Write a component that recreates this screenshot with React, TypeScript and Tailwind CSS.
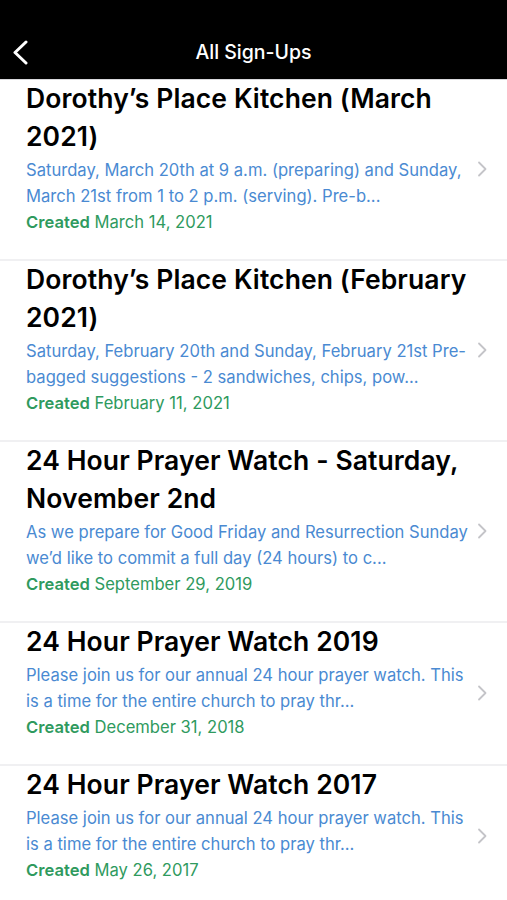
const items = [
  {
    title: 'Dorothy’s Place Kitchen (March 2021)',
    desc: 'Saturday, March 20th at 9 a.m. (preparing) and Sunday, March 21st from 1 to 2 p.m. (serving). Pre-b...',
    created: 'March 14, 2021',
  },
  {
    title: 'Dorothy’s Place Kitchen (February 2021)',
    desc: 'Saturday, February 20th and Sunday, February 21st Pre-bagged suggestions - 2 sandwiches, chips, pow...',
    created: 'February 11, 2021',
  },
  {
    title: '24 Hour Prayer Watch - Saturday, November 2nd',
    desc: 'As we prepare for Good Friday and Resurrection Sunday we’d like to commit a full day (24 hours) to c...',
    created: 'September 29, 2019',
  },
  {
    title: '24 Hour Prayer Watch 2019',
    desc: 'Please join us for our annual 24 hour prayer watch. This is a time for the entire church to pray thr...',
    created: 'December 31, 2018',
  },
  {
    title: '24 Hour Prayer Watch 2017',
    desc: 'Please join us for our annual 24 hour prayer watch. This is a time for the entire church to pray thr...',
    created: 'May 26, 2017',
  },
];

const App = () => {
  return (
    <div className="w-[507px] h-[900px] overflow-hidden bg-white font-['Inter',sans-serif]">
      <div className="relative flex h-[79px] items-end justify-center bg-black pb-[12px]">
        <svg
          className="absolute left-[12px] top-[40px]"
          width="18"
          height="25"
          viewBox="0 0 18 25"
          fill="none"
          stroke="white"
          strokeWidth="3"
          strokeLinecap="round"
          strokeLinejoin="round"
        >
          <path d="M14 2 L3 12.5 L14 23" />
        </svg>
        <div className="text-[19.5px] font-medium text-white">All Sign-Ups</div>
      </div>
      <div className="h-[1px] bg-[#d8d8dc]" />
      {items.map((item, i) => (
        <div key={i}>
          {i > 0 && <div className="h-[2px] bg-[#f0f0f2]" />}
          <div className="flex items-center pl-[26px] pr-[20px] pb-[24px]">
            <div className="w-[447px] shrink-0">
              <div className="-mt-[1px] text-[26.5px] font-semibold leading-[38px] text-black tracking-[0.1px]">{item.title}</div>
              <div className="mt-[2px] w-[446px] text-[16.6px] leading-[26px] text-[#4a8ad2]">{item.desc}</div>
              <div className="text-[16.6px] leading-[26px] text-[#2f9a5e]">
                <span className="font-semibold">Created</span> {item.created}
              </div>
            </div>
            <svg
              className="ml-auto mt-[23px]"
              width="10"
              height="16"
              viewBox="0 0 10 16"
              fill="none"
              stroke="#c4c4c8"
              strokeWidth="1.8"
              strokeLinecap="round"
              strokeLinejoin="round"
            >
              <path d="M2 1.5 L8.5 8 L2 14.5" />
            </svg>
          </div>
        </div>
      ))}
    </div>
  );
};

export default App;
